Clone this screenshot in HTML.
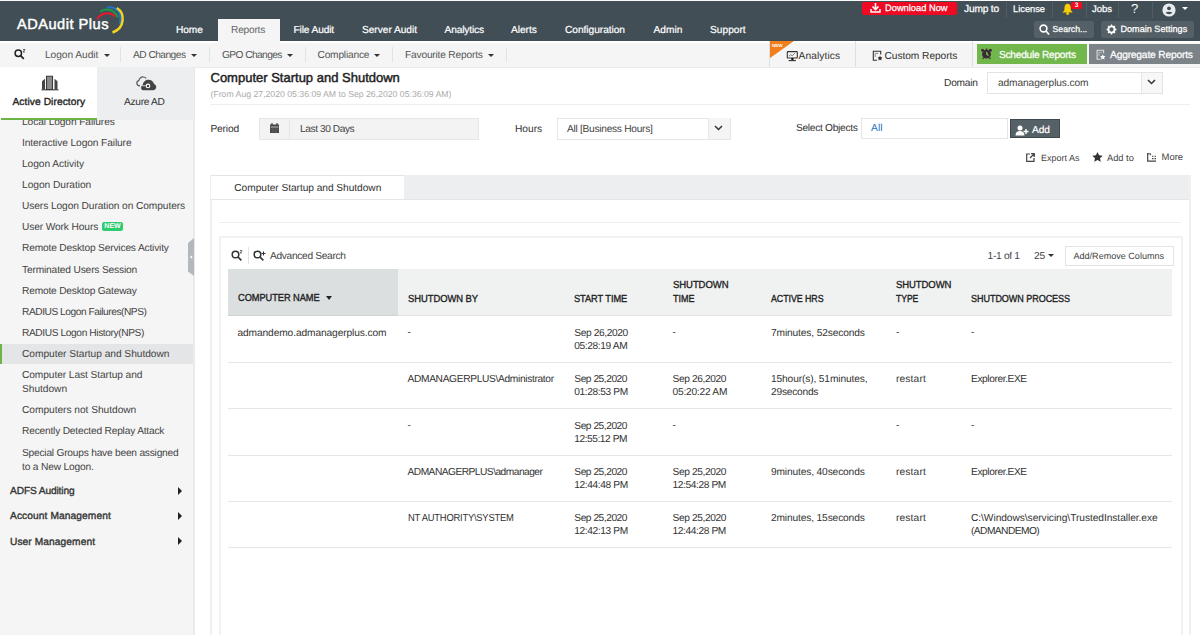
<!DOCTYPE html>
<html><head><meta charset="utf-8">
<style>
*{box-sizing:border-box;margin:0;padding:0}
html,body{width:1200px;height:635px;overflow:hidden;background:#fff}
body{position:relative;font-family:"Liberation Sans",sans-serif;color:#333;text-rendering:geometricPrecision}
.a{position:absolute}
.t{position:absolute;white-space:nowrap;height:20px;line-height:20px}
#hdr{left:0;top:0;width:1200px;height:41px;background:#424e56}
#sub{left:0;top:41px;width:1200px;height:26.5px;background:#f5f5f5;border-top:2px solid #fff;border-bottom:1px solid #ebebeb}
.nav{color:#fff;font-size:10.1px;top:20px;-webkit-text-stroke:0.2px #fff}
.sb{color:#555;font-size:9.8px;top:45px}
.sep{position:absolute;width:1px;background:#e3e3e3;top:47px;height:15px}
.hsep{position:absolute;width:1px;background:#525c64;top:2px;height:15.5px}
#side{left:0;top:67px;width:195px;height:568px;background:#f5f5f5;border-right:2px solid #e8eaec}
.si{color:#444;font-size:10px;left:22px}
.sh{color:#333;font-size:9.6px;-webkit-text-stroke:0.35px #333;left:10px}
.caret{position:absolute;width:0;height:0;border-left:3px solid transparent;border-right:3px solid transparent;border-top:3px solid #333}
.rc{position:absolute;width:0;height:0;border-top:4px solid transparent;border-bottom:4px solid transparent;border-left:4px solid #222}
.th{font-size:9.2px;-webkit-text-stroke:0.35px #222;color:#222}
.td{font-size:10px;color:#333}
.hl{position:absolute;left:228px;width:944px;height:1px;background:#e6e6e6}
</style></head><body>
<!-- HEADER -->
<div id="hdr" class="a"></div>
<div class="a" style="left:0;top:0;width:1200px;height:1px;background:#fafafa"></div>
<div class="t" style="left:17px;top:15.3px;font-size:14.6px;letter-spacing:0.5px;-webkit-text-stroke:0.45px #fff;color:#fff;">ADAudit Plus</div>
<svg class="a" style="left:90px;top:2px" width="40" height="34" viewBox="0 0 40 34">
 <path d="M7.2 17.3 C10 11 20 9 25.2 14.5" stroke="#e8192c" stroke-width="1.9" fill="none"/>
 <path d="M10.2 9.8 C14 6.5 24 5.5 27.9 15.5" stroke="#1d9a48" stroke-width="2" fill="none"/>
 <path d="M17.1 5.6 C25 4 32.5 10 30 22" stroke="#1e74c8" stroke-width="2" fill="none"/>
 <path d="M26.8 6 C35 11 35.5 26 22.5 30.5" stroke="#f5d31c" stroke-width="2.5" fill="none"/>
</svg>
<div class="a" style="left:218px;top:19px;width:62px;height:25px;background:#f5f5f5;z-index:1"></div>
<div class="t nav" style="left:176px;font-size:10.2px;letter-spacing:-0.078px;top:21px">Home</div>
<div class="t nav" style="z-index:2;left:231px;color:#666;-webkit-text-stroke:0;font-size:10.2px;letter-spacing:-0.227px;top:21px">Reports</div>
<div class="t nav" style="left:293.5px;font-size:10.2px;letter-spacing:-0.142px;top:21px">File Audit</div>
<div class="t nav" style="left:362px;font-size:10.2px;letter-spacing:-0.047px;top:21px">Server Audit</div>
<div class="t nav" style="left:444.5px;font-size:10.2px;letter-spacing:-0.156px;top:21px">Analytics</div>
<div class="t nav" style="left:511px;font-size:10.2px;letter-spacing:-0.046px;top:21px">Alerts</div>
<div class="t nav" style="left:565px;font-size:10.2px;letter-spacing:-0.047px;top:21px">Configuration</div>
<div class="t nav" style="left:653.5px;font-size:10.2px;letter-spacing:0.000px;top:21px">Admin</div>
<div class="t nav" style="left:710px;font-size:10.2px;letter-spacing:-0.000px;top:21px">Support</div>

<div class="a" style="left:862px;top:1.5px;width:95px;height:13.5px;background:#ee0a23;border-radius:2px"></div>
<svg class="a" style="left:870px;top:3px" width="11" height="10" viewBox="0 0 11 10"><path d="M5.5 0v6M2.5 3.5l3 3 3-3" stroke="#fff" stroke-width="1.6" fill="none"/><path d="M1 6v3h9V6" stroke="#fff" stroke-width="1.4" fill="none"/></svg>
<div class="t" style="left:885px;top:-2px;font-size:9.3px;color:#fff;-webkit-text-stroke:0.25px #fff">Download Now</div>
<div class="t" style="left:964px;top:0px;color:#fff;-webkit-text-stroke:0.25px #fff;font-size:10.2px;letter-spacing:-0.185px">Jump to</div>
<div class="hsep" style="left:1006px"></div>
<div class="t" style="left:1013px;top:-1px;font-size:9.3px;color:#fff;-webkit-text-stroke:0.25px #fff">License</div>
<div class="hsep" style="left:1052px"></div>
<svg class="a" style="left:1062px;top:3px" width="12" height="12" viewBox="0 0 12 12"><path d="M5.6 .8C3.3 .8 2.6 2.8 2.5 4.5L2.3 7.3 .4 9.4H10.8L8.9 7.3 8.7 4.5C8.6 2.8 7.9 .8 5.6 .8Z" fill="#f5cd00"/><ellipse cx="5.6" cy="10.6" rx="1.5" ry="1.3" fill="#f5cd00"/></svg>
<div class="a" style="left:1071px;top:1.5px;width:11px;height:7.5px;background:#f50a1f;border-radius:1.5px;color:#fff;font-size:6.5px;line-height:7.5px;text-align:center;font-weight:bold">3</div>
<div class="hsep" style="left:1086px"></div>
<div class="t" style="left:1092px;top:-0.5px;font-size:9.5px;color:#fff;-webkit-text-stroke:0.25px #fff">Jobs</div>
<div class="hsep" style="left:1118px"></div>
<div class="t" style="left:1131px;top:-1px;font-size:13px;color:#fff">?</div>
<div class="hsep" style="left:1152px"></div>
<svg class="a" style="left:1162px;top:2.5px" width="14" height="14" viewBox="0 0 14 14"><circle cx="7" cy="7" r="6.6" fill="#e9ecee"/><circle cx="7" cy="5.3" r="1.9" fill="#434d54"/><path d="M3.6 9.6C4.5 10.9 5.6 11.3 7 11.3S9.5 10.9 10.4 9.6C9.5 9 8.4 8.7 7 8.7S4.5 9 3.6 9.6Z" fill="#434d54"/></svg>
<div class="caret" style="left:1181.5px;top:7px;border-left-width:3.3px;border-right-width:3.3px;border-top:3.8px solid #fff"></div>

<div class="a" style="left:1034px;top:21px;width:60px;height:17px;background:#555f66;border-radius:2px"></div>
<svg class="a" style="left:1039px;top:24px" width="11" height="12" viewBox="0 0 11 12"><circle cx="4.5" cy="4.5" r="3.4" stroke="#fff" stroke-width="1.6" fill="none"/><path d="M7 7l3 3.5" stroke="#fff" stroke-width="1.8"/></svg>
<div class="t" style="left:1052.5px;top:19px;font-size:8.7px;color:#fff;-webkit-text-stroke:0.25px #fff">Search...</div>
<div class="a" style="left:1101px;top:21px;width:93px;height:17px;background:#555f66;border-radius:2px"></div>
<svg class="a" style="left:1106px;top:24.3px" width="11" height="11" viewBox="0 0 11 11"><circle cx="5.5" cy="5.5" r="3.1" stroke="#fff" stroke-width="1.9" fill="none"/><path d="M9.10 5.50L10.40 5.50M8.05 8.05L8.96 8.96M5.50 9.10L5.50 10.40M2.95 8.05L2.04 8.96M1.90 5.50L0.60 5.50M2.95 2.95L2.04 2.04M5.50 1.90L5.50 0.60M8.05 2.95L8.96 2.04" stroke="#fff" stroke-width="1.3"/></svg>
<div class="t" style="left:1120.5px;top:19px;font-size:9.1px;color:#fff;-webkit-text-stroke:0.25px #fff">Domain Settings</div>

<!-- SUBBAR -->
<div id="sub" class="a"></div>
<svg class="a" style="left:14px;top:49px" width="12" height="11" viewBox="0 0 12 11"><circle cx="4.3" cy="4.3" r="3.2" stroke="#222" stroke-width="1.5" fill="none"/><path d="M6.6 6.6l3.2 3.2" stroke="#222" stroke-width="1.7"/><path d="M9 0.5h2l-2 2.5h2" stroke="#222" stroke-width="0.7" fill="none"/></svg>
<div class="t sb" style="left:45px;font-size:10.2px;letter-spacing:-0.048px;top:46px">Logon Audit</div>
<div class="caret" style="left:103.5px;top:54px"></div>
<div class="sep" style="left:120px"></div>
<div class="t sb" style="left:133px;font-size:10.2px;letter-spacing:-0.531px;top:46px">AD Changes</div>
<div class="caret" style="left:190.5px;top:54px"></div>
<div class="sep" style="left:209px"></div>
<div class="t sb" style="left:222px;font-size:10.2px;letter-spacing:-0.580px;top:46px">GPO Changes</div>
<div class="caret" style="left:286.5px;top:54px"></div>
<div class="sep" style="left:305px"></div>
<div class="t sb" style="left:317.5px;font-size:10.2px;letter-spacing:-0.201px;top:46px">Compliance</div>
<div class="caret" style="left:374px;top:54px"></div>
<div class="sep" style="left:392px"></div>
<div class="t sb" style="left:405px;font-size:10.2px;letter-spacing:-0.193px;top:46px">Favourite Reports</div>
<div class="caret" style="left:488px;top:54px"></div>
<div class="sep" style="left:505.5px"></div>

<div class="a" style="left:769px;top:41px;width:1px;height:26px;background:#e0e0e0"></div>
<svg class="a" style="left:770px;top:41px" width="24" height="17" viewBox="0 0 24 17"><path d="M0 0H24L0 17z" fill="#f07f1b"/><text x="2" y="6" font-size="4.5" fill="#fff" font-family="Liberation Sans" font-weight="bold">NEW</text></svg>
<svg class="a" style="left:786px;top:50px" width="12" height="12" viewBox="0 0 12 12"><rect x="1.3" y="1.6" width="10" height="6.4" rx=".6" stroke="#333" stroke-width="1.1" fill="none"/><path d="M3 6.2L4.7 4.6 6.2 5.8 8.8 3.3" stroke="#666" stroke-width=".9" fill="none"/><rect x="5.3" y="8" width="2.2" height="2.2" fill="#111"/><path d="M2.6 10.6H9.9" stroke="#333" stroke-width="1.1"/></svg>
<div class="t" style="left:798.5px;top:46.5px;color:#333;font-size:10.2px;letter-spacing:0.102px">Analytics</div>
<div class="a" style="left:855px;top:41px;width:1px;height:26px;background:#e0e0e0"></div>
<svg class="a" style="left:872px;top:50px" width="11" height="12" viewBox="0 0 11 12"><path d="M5 10.3H1.3V1.2H8.7V4.6" stroke="#333" stroke-width="1.1" fill="none"/><path d="M3.2 3.3H6.3M3.2 3.3V7" stroke="#999" stroke-width="1.2" fill="none"/><path d="M8.00 5.60 L8.71 7.32 L10.57 7.47 L9.16 8.68 L9.59 10.48 L8.00 9.52 L6.41 10.48 L6.84 8.68 L5.43 7.47 L7.29 7.32Z" fill="#222"/></svg>
<div class="t" style="left:884.5px;top:46.5px;color:#333;font-size:10.2px;letter-spacing:-0.050px">Custom Reports</div>
<div class="a" style="left:972px;top:41px;width:1px;height:26px;background:#e0e0e0"></div>
<div class="a" style="left:977px;top:44px;width:109.5px;height:20px;background:#72b74c"></div>
<svg class="a" style="left:980px;top:47px" width="13" height="13" viewBox="0 0 13 13"><circle cx="6.5" cy="7.2" r="4.4" fill="#3b2a35"/><circle cx="2.6" cy="3.3" r="1.5" fill="#3b2a35"/><circle cx="10.4" cy="3.3" r="1.5" fill="#3b2a35"/><circle cx="6.5" cy="2.3" r=".9" fill="#3b2a35"/><path d="M6.5 4.8V7.6L8.4 8.6Z" fill="#72b74c" stroke="#72b74c" stroke-width=".8"/><path d="M3.6 10.6L2.6 12M9.4 10.6L10.4 12" stroke="#3b2a35" stroke-width="1.2"/></svg>
<div class="t" style="left:999px;top:46px;color:#fff;-webkit-text-stroke:0.25px #fff;font-size:10.2px;letter-spacing:-0.265px">Schedule Reports</div>
<div class="a" style="left:1089px;top:44px;width:111px;height:20px;background:#7b8288"></div>
<svg class="a" style="left:1096px;top:49px" width="11" height="12" viewBox="0 0 11 12"><path d="M4.5 10.3H1.1V1.2H7.6V4.3" stroke="#ddd" stroke-width="1.1" fill="none"/><path d="M3 3.2H5.8M3 3.2V7" stroke="#bbb" stroke-width="1.1" fill="none"/><path d="M6.80 5.20 L7.59 7.11 L9.65 7.27 L8.08 8.62 L8.56 10.63 L6.80 9.55 L5.04 10.63 L5.52 8.62 L3.95 7.27 L6.01 7.11Z" fill="#fff"/></svg>
<div class="t" style="left:1110px;top:46px;color:#fff;-webkit-text-stroke:0.25px #fff;font-size:10.2px;letter-spacing:-0.163px">Aggregate Reports</div>

<!-- SIDEBAR -->
<div id="side" class="a"></div>
<div class="a" style="left:97px;top:67px;width:97px;height:53px;background:#eceeef"></div>
<div class="a" style="left:0;top:67px;width:97px;height:53px;background:#fff"></div>
<div class="a" style="left:1px;top:118px;width:96px;height:2px;background:#6cb446"></div>
<svg class="a" style="left:40px;top:74px" width="20" height="17" viewBox="0 0 20 17"><path d="M6.5 2.2h6v13.3h-6z" stroke="#3a3a3a" stroke-width="1.1" fill="#8c8c8c"/><path d="M2 7.3L5 4.7V15.5H2z" fill="#454545"/><path d="M14.5 4.7L17.5 7.3V15.5H14.5z" fill="#454545"/><path d="M1.5 15.8H18.5" stroke="#3a3a3a" stroke-width="1.1"/></svg>
<div class="t" style="left:12.5px;top:92.5px;-webkit-text-stroke:0.35px #222;color:#222;font-size:10.2px;letter-spacing:0.080px">Active Directory</div>
<svg class="a" style="left:132px;top:72px" width="28" height="22" viewBox="0 0 28 22"><path d="M8 13.8C4 13.8 4 9.2 6.8 8.6 7.3 6 9.5 4.6 11.5 5 12.6 5.1 13.5 5.6 14.2 6.4" stroke="#555" stroke-width="1.15" fill="none"/><path d="M11 18.2C8.7 18.2 8.3 14 10.6 13.5 11 9.8 13.8 7.8 16.5 7.8 19.3 7.8 21.4 9.8 22 12 23.6 12.4 24.2 13.8 24.2 15 24.2 17 22.8 18.2 21 18.2Z" fill="#444"/><path d="M9.3 13.7H14.3" stroke="#bbb" stroke-width="1.1"/><circle cx="16" cy="13.9" r="1.8" stroke="#fff" stroke-width="1.1" fill="#444"/></svg>
<div class="t" style="left:124px;top:92.5px;color:#333;font-size:10.2px;letter-spacing:-0.304px">Azure AD</div>

<div class="a" style="left:0;top:120px;width:193px;height:10px;overflow:hidden">
  <div class="t si" style="top:-7.5px;font-size:10.2px;letter-spacing:-0.092px">Local Logon Failures</div>
</div>
<div class="t si" style="top:133.5px;font-size:10.2px;letter-spacing:-0.107px">Interactive Logon Failure</div>
<div class="t si" style="top:154.5px;font-size:10.2px;letter-spacing:-0.066px">Logon Activity</div>
<div class="t si" style="top:175.5px;font-size:10.2px;letter-spacing:-0.031px">Logon Duration</div>
<div class="t si" style="top:197px;font-size:10.2px;letter-spacing:-0.087px">Users Logon Duration on Computers</div>
<div class="t si" style="top:218px;font-size:10.2px;letter-spacing:-0.120px">User Work Hours</div>
<div class="a" style="left:102px;top:222px;width:21px;height:9px;background:#2ecc71;border-radius:2px;color:#fff;font-size:7px;line-height:9px;text-align:center;font-weight:bold">NEW</div>
<div class="t si" style="top:239px;font-size:10.2px;letter-spacing:-0.173px">Remote Desktop Services Activity</div>
<div class="t si" style="top:260.5px;font-size:10.2px;letter-spacing:-0.158px">Terminated Users Session</div>
<div class="t si" style="top:281.5px;font-size:10.2px;letter-spacing:-0.191px">Remote Desktop Gateway</div>
<div class="t si" style="top:302.5px;font-size:10.2px;letter-spacing:-0.461px">RADIUS Logon Failures(NPS)</div>
<div class="t si" style="top:323.5px;font-size:10.2px;letter-spacing:-0.396px">RADIUS Logon History(NPS)</div>
<div class="a" style="left:0;top:344px;width:193px;height:20px;background:#e3e5e6"></div>
<div class="a" style="left:0;top:344px;width:2px;height:20px;background:#6cb446"></div>
<div class="t si" style="top:345px;font-size:10.2px;letter-spacing:-0.033px">Computer Startup and Shutdown</div>
<div class="t si" style="top:366px;font-size:10.2px;letter-spacing:-0.078px">Computer Last Startup and</div>
<div class="t si" style="top:380px;font-size:10.2px;letter-spacing:-0.038px">Shutdown</div>
<div class="t si" style="top:401px;font-size:10.2px;letter-spacing:-0.033px">Computers not Shutdown</div>
<div class="t si" style="top:421.5px;font-size:10.2px;letter-spacing:-0.197px">Recently Detected Replay Attack</div>
<div class="t si" style="top:444px;font-size:10.2px;letter-spacing:-0.220px">Special Groups have been assigned</div>
<div class="t si" style="top:457.5px;font-size:10.2px;letter-spacing:-0.163px">to a New Logon.</div>
<div class="t sh" style="top:482px;font-size:10.2px;letter-spacing:-0.135px">ADFS Auditing</div>
<div class="rc" style="left:177.5px;top:486.5px;border-top-width:4px;border-bottom-width:4px;border-left-width:4px"></div>
<div class="t sh" style="top:507px;font-size:10.2px;letter-spacing:0.099px">Account Management</div>
<div class="rc" style="left:177.5px;top:511.5px;border-top-width:4px;border-bottom-width:4px;border-left-width:4px"></div>
<div class="t sh" style="top:533px;font-size:10.2px;letter-spacing:0.084px">User Management</div>
<div class="rc" style="left:177.5px;top:537px;border-top-width:4px;border-bottom-width:4px;border-left-width:4px"></div>
<svg class="a" style="left:188px;top:238px" width="6" height="38" viewBox="0 0 6 38"><path d="M6 0V38L0 33.5V5z" fill="#b3b8bc"/><path d="M1.8 19l2.4-1.8v3.6z" fill="#fff"/></svg>

<!-- MAIN -->
<div class="t" style="left:210.5px;top:67.5px;font-size:13px;-webkit-text-stroke:0.45px #222;color:#222">Computer Startup and Shutdown</div>
<div class="t" style="left:210.5px;top:84px;font-size:8.7px;color:#aaa">(From Aug 27,2020 05:36:09 AM to Sep 26,2020 05:36:09 AM)</div>
<div class="a" style="left:210px;top:104px;width:980px;height:1px;background:#eeeeee"></div>
<div class="t" style="left:944px;top:74px;color:#333;font-size:10.2px;letter-spacing:-0.216px">Domain</div>
<div class="a" style="left:987px;top:72px;width:176px;height:22px;background:#fff;border:1px solid #e3e3e3"></div>
<div class="a" style="left:1141px;top:73px;width:1px;height:20px;background:#e3e3e3"></div>
<div class="a" style="left:1142px;top:73px;width:20px;height:20px;background:#f7f7f7"></div>
<svg class="a" style="left:1147px;top:79px" width="9" height="6" viewBox="0 0 9 6"><path d="M1 1l3.5 3.5L8 1" stroke="#333" stroke-width="1.5" fill="none"/></svg>
<div class="t" style="left:998px;top:74px;color:#444;font-size:10.2px;letter-spacing:-0.107px">admanagerplus.com</div>

<div class="t" style="left:210.5px;top:119.5px;color:#333;font-size:10.2px;letter-spacing:-0.181px">Period</div>
<div class="a" style="left:259px;top:117.5px;width:220px;height:22px;background:#f3f3f3;border:1px solid #e6e6e6"></div>
<div class="a" style="left:289px;top:118px;width:1px;height:21px;background:#e6e6e6"></div>
<svg class="a" style="left:270px;top:123px" width="9" height="10" viewBox="0 0 9 10"><rect x="0" y="1.5" width="9" height="8.5" fill="#444"/><path d="M2 0v2M7 0v2" stroke="#444" stroke-width="1.2"/><path d="M.5 4h8" stroke="#f3f3f3" stroke-width=".7"/><path d="M3 4v6M6 4v6M0 6.2h9M0 8.2h9" stroke="#888" stroke-width=".3"/></svg>
<div class="t" style="left:300px;top:120px;color:#444;font-size:10.2px;letter-spacing:-0.432px">Last 30 Days</div>
<div class="t" style="left:515px;top:119.5px;color:#333;font-size:10.2px;letter-spacing:0.004px">Hours</div>
<div class="a" style="left:556.5px;top:117.5px;width:174.5px;height:22px;background:#fff;border:1px solid #e6e6e6"></div>
<div class="a" style="left:708px;top:118px;width:22px;height:20.5px;background:#f5f5f5;border-left:1px solid #e6e6e6"></div>
<svg class="a" style="left:714px;top:125px" width="9" height="6" viewBox="0 0 9 6"><path d="M1 1l3.5 3.5L8 1" stroke="#333" stroke-width="1.5" fill="none"/></svg>
<div class="t" style="left:567px;top:120px;color:#444;font-size:10.2px;letter-spacing:-0.280px">All [Business Hours]</div>
<div class="t" style="left:796px;top:119px;color:#333;font-size:10.2px;letter-spacing:-0.294px">Select Objects</div>
<div class="a" style="left:861px;top:117.5px;width:147px;height:21.5px;background:#fff;border:1px solid #e6e6e6"></div>
<div class="t" style="left:871px;top:118.5px;color:#1a73c5;font-size:10.2px;letter-spacing:0.109px">All</div>
<div class="a" style="left:1010px;top:118.5px;width:49.5px;height:19.5px;background:#566067;border:1px solid #3e484e"></div>
<svg class="a" style="left:1015px;top:124.5px" width="14" height="11" viewBox="0 0 14 11"><circle cx="5" cy="3" r="2.5" fill="#fff"/><path d="M0.5 10.5c0-3 2-4.5 4.5-4.5s4.5 1.5 4.5 4.5z" fill="#fff"/><path d="M11 4v5M8.5 6.5h5" stroke="#fff" stroke-width="1.4"/></svg>
<div class="t" style="left:1032px;top:120.5px;color:#fff;-webkit-text-stroke:0.2px #fff;font-size:10.2px;letter-spacing:-0.086px">Add</div>

<svg class="a" style="left:1026px;top:152.5px" width="9" height="9" viewBox="0 0 9 9"><path d="M4 1H.7v7.3H8V5" stroke="#444" stroke-width="1.2" fill="none"/><path d="M4 5l4-4M5 .7h3.3V4" stroke="#444" stroke-width="1.2" fill="none"/></svg>
<div class="t" style="left:1041px;top:148px;font-size:9px;color:#444">Export As</div>
<svg class="a" style="left:1092px;top:151.5px" width="11" height="10" viewBox="0 0 11 10"><path d="M5.5 0l1.6 3.3 3.6.4-2.7 2.5.8 3.6-3.3-1.9-3.3 1.9.8-3.6L.3 3.7l3.6-.4z" fill="#333"/></svg>
<div class="t" style="left:1107px;top:148px;font-size:9.3px;color:#444">Add to</div>
<svg class="a" style="left:1147px;top:153px" width="10" height="9" viewBox="0 0 10 9"><path d="M.7 0v8.2H9" stroke="#444" stroke-width="1.2" fill="none"/><path d="M0 .7h3.5M3.5 .7v1.5M5 3.2h1.5M7.5 3.2H9M5 5.6h1.5M7.5 5.6H9" stroke="#444" stroke-width="1.1"/></svg>
<div class="t" style="left:1161.5px;top:148px;font-size:9.5px;color:#444">More</div>

<!-- report container -->
<div class="a" style="left:210px;top:174.5px;width:981px;height:470px;border-left:2px solid #eef0f1;border-right:2px solid #eef0f1"></div>
<div class="a" style="left:211px;top:174.5px;width:978px;height:25.5px;background:#eceeef"></div>
<div class="a" style="left:211px;top:174.5px;width:193px;height:25px;background:#fff;border-top:1px solid #e3e3e3"></div>
<div class="a" style="left:211px;top:199px;width:978px;height:1px;background:#e4e6e8"></div>
<div class="t" style="left:234.3px;top:179px;color:#333;font-size:10.2px;letter-spacing:-0.048px">Computer Startup and Shutdown</div>
<div class="a" style="left:219px;top:222px;width:962px;height:1px;background:#efefef"></div>
<div class="a" style="left:219px;top:236px;width:963.5px;height:420px;border:2px solid #eff1f2"></div>

<svg class="a" style="left:231px;top:250px" width="12" height="12" viewBox="0 0 12 12"><circle cx="4.5" cy="4.5" r="3.3" stroke="#333" stroke-width="1.5" fill="none"/><path d="M7 7l3.3 3.3" stroke="#333" stroke-width="1.7"/><path d="M9 .5h2l-2 2.5h2" stroke="#333" stroke-width=".7" fill="none"/></svg>
<div class="a" style="left:248px;top:247px;width:1px;height:17px;background:#e3e3e3"></div>
<svg class="a" style="left:253px;top:250px" width="13" height="12" viewBox="0 0 13 12"><circle cx="4.5" cy="4.5" r="3.3" stroke="#333" stroke-width="1.5" fill="none"/><path d="M7 7l3.3 3.3" stroke="#333" stroke-width="1.7"/><path d="M10.5 1.5v4M8.5 3.5h4" stroke="#333" stroke-width="1"/></svg>
<div class="t" style="left:270px;top:246.5px;color:#444;font-size:10.2px;letter-spacing:-0.317px">Advanced Search</div>

<div class="t" style="left:987.5px;top:247px;color:#444;font-size:10.2px;letter-spacing:-0.288px">1-1 of 1</div>
<div class="t" style="left:1034px;top:247px;color:#444;font-size:10.2px;letter-spacing:-0.203px">25</div>
<div class="caret" style="left:1047.5px;top:254px;border-top-color:#333"></div>
<div class="a" style="left:1065px;top:246px;width:108.5px;height:19.5px;border:1px solid #e3e3e3;background:#fff"></div>
<div class="t" style="left:1073.5px;top:245.5px;font-size:9.05px;color:#444">Add/Remove Columns</div>

<!-- table -->
<div class="a" style="left:228px;top:269px;width:944px;height:46.5px;background:#f0f2f2;border-bottom:1px solid #e2e4e4"></div>
<div class="a" style="left:228px;top:269px;width:170px;height:46.5px;background:#dcdfe0;border-bottom:1px solid #d2d2d2"></div>
<div class="t th" style="left:237.5px;top:288.5px;transform:scaleX(0.909);transform-origin:0 0;font-size:10.2px;letter-spacing:-0.061px">COMPUTER NAME</div>
<div class="caret" style="left:325.6px;top:296px;border-left-width:3.6px;border-right-width:3.6px;border-top:4px solid #222"></div>
<div class="t th" style="left:407.5px;top:289.5px;transform:scaleX(0.925);transform-origin:0 0;font-size:10.2px;letter-spacing:-0.065px">SHUTDOWN BY</div>
<div class="t th" style="left:574.3px;top:289.5px;transform:scaleX(0.906);transform-origin:0 0;font-size:10.2px;letter-spacing:-0.053px">START TIME</div>
<div class="t th" style="left:672.5px;top:276px;transform:scaleX(0.934);transform-origin:0 0;font-size:10.2px;letter-spacing:-0.075px">SHUTDOWN</div>
<div class="t th" style="left:672.5px;top:289.5px;transform:scaleX(0.891);transform-origin:0 0;font-size:10.2px;letter-spacing:-0.060px">TIME</div>
<div class="t th" style="left:771px;top:289.5px;transform:scaleX(0.867);transform-origin:0 0;font-size:10.2px;letter-spacing:-0.055px">ACTIVE HRS</div>
<div class="t th" style="left:896px;top:276px;transform:scaleX(0.932);transform-origin:0 0;font-size:10.2px;letter-spacing:-0.074px">SHUTDOWN</div>
<div class="t th" style="left:896px;top:289.5px;transform:scaleX(0.845);transform-origin:0 0;font-size:10.2px;letter-spacing:-0.066px">TYPE</div>
<div class="t th" style="left:971px;top:289.5px;transform:scaleX(0.887);transform-origin:0 0;font-size:10.2px;letter-spacing:-0.062px">SHUTDOWN PROCESS</div>

<!-- row 1 -->
<div class="t td" style="left:237.5px;top:323.5px;font-size:10.2px;letter-spacing:-0.107px">admandemo.admanagerplus.com</div>
<div class="t td" style="left:407.5px;top:322.5px;font-size:9.9px;letter-spacing:0.000px">-</div>
<div class="t td" style="left:574.3px;top:323.5px;font-size:10.2px;letter-spacing:-0.391px">Sep 26,2020</div>
<div class="t td" style="left:574.3px;top:336.5px;font-size:10.2px;letter-spacing:-0.386px">05:28:19 AM</div>
<div class="t td" style="left:672.5px;top:322.5px;font-size:9.9px;letter-spacing:0.000px">-</div>
<div class="t td" style="left:771px;top:323.5px;font-size:10.2px;letter-spacing:-0.131px">7minutes, 52seconds</div>
<div class="t td" style="left:896px;top:322.5px;font-size:9.9px;letter-spacing:0.000px">-</div>
<div class="t td" style="left:971px;top:322.5px;font-size:9.9px;letter-spacing:0.000px">-</div>
<div class="hl" style="top:362px"></div>
<!-- row 2 -->
<div class="t td" style="left:407.5px;top:370px;font-size:10.2px;letter-spacing:-0.329px">ADMANAGERPLUS\Administrator</div>
<div class="t td" style="left:574.3px;top:370px;font-size:10.2px;letter-spacing:-0.461px">Sep 25,2020</div>
<div class="t td" style="left:574.3px;top:383px;font-size:10.2px;letter-spacing:-0.391px">01:28:53 PM</div>
<div class="t td" style="left:672.5px;top:370px;font-size:10.2px;letter-spacing:-0.381px">Sep 26,2020</div>
<div class="t td" style="left:672.5px;top:383px;font-size:10.2px;letter-spacing:-0.228px">05:20:22 AM</div>
<div class="t td" style="left:771px;top:370px;font-size:10.2px;letter-spacing:-0.130px">15hour(s), 51minutes,</div>
<div class="t td" style="left:771px;top:383px;font-size:10.2px;letter-spacing:-0.227px">29seconds</div>
<div class="t td" style="left:896px;top:370px;font-size:10.2px;letter-spacing:0.152px">restart</div>
<div class="t td" style="left:971px;top:370px;font-size:10.2px;letter-spacing:-0.405px">Explorer.EXE</div>
<div class="hl" style="top:408px"></div>
<!-- row 3 -->
<div class="t td" style="left:407.5px;top:415.5px;font-size:9.9px;letter-spacing:0.000px">-</div>
<div class="t td" style="left:574.3px;top:416.5px;font-size:10.2px;letter-spacing:-0.461px">Sep 25,2020</div>
<div class="t td" style="left:574.3px;top:429.5px;font-size:10.2px;letter-spacing:-0.461px">12:55:12 PM</div>
<div class="t td" style="left:672.5px;top:415.5px;font-size:9.9px;letter-spacing:0.000px">-</div>
<div class="t td" style="left:896px;top:415.5px;font-size:9.9px;letter-spacing:0.000px">-</div>
<div class="t td" style="left:971px;top:415.5px;font-size:9.9px;letter-spacing:0.000px">-</div>
<div class="hl" style="top:454.5px"></div>
<!-- row 4 -->
<div class="t td" style="left:407.5px;top:462.5px;font-size:10.2px;letter-spacing:-0.511px">ADMANAGERPLUS\admanager</div>
<div class="t td" style="left:574.3px;top:462.5px;font-size:10.2px;letter-spacing:-0.461px">Sep 25,2020</div>
<div class="t td" style="left:574.3px;top:475.5px;font-size:10.2px;letter-spacing:-0.391px">12:44:48 PM</div>
<div class="t td" style="left:672.5px;top:462.5px;font-size:10.2px;letter-spacing:-0.391px">Sep 25,2020</div>
<div class="t td" style="left:672.5px;top:475.5px;font-size:10.2px;letter-spacing:-0.391px">12:54:28 PM</div>
<div class="t td" style="left:771px;top:462.5px;font-size:10.2px;letter-spacing:-0.140px">9minutes, 40seconds</div>
<div class="t td" style="left:896px;top:462.5px;font-size:10.2px;letter-spacing:0.152px">restart</div>
<div class="t td" style="left:971px;top:462.5px;font-size:10.2px;letter-spacing:-0.405px">Explorer.EXE</div>
<div class="hl" style="top:501px"></div>
<!-- row 5 -->
<div class="t td" style="left:407.5px;top:509px;font-size:10.2px;letter-spacing:-0.25px;transform:scaleX(0.922);transform-origin:0 0">NT AUTHORITY\SYSTEM</div>
<div class="t td" style="left:574.3px;top:509px;font-size:10.2px;letter-spacing:-0.461px">Sep 25,2020</div>
<div class="t td" style="left:574.3px;top:522px;font-size:10.2px;letter-spacing:-0.391px">12:42:13 PM</div>
<div class="t td" style="left:672.5px;top:509px;font-size:10.2px;letter-spacing:-0.391px">Sep 25,2020</div>
<div class="t td" style="left:672.5px;top:522px;font-size:10.2px;letter-spacing:-0.391px">12:44:28 PM</div>
<div class="t td" style="left:771px;top:509px;font-size:10.2px;letter-spacing:-0.140px">2minutes, 15seconds</div>
<div class="t td" style="left:896px;top:509px;font-size:10.2px;letter-spacing:0.152px">restart</div>
<div class="t td" style="left:971px;top:509px;font-size:10.2px;letter-spacing:-0.051px">C:\Windows\servicing\TrustedInstaller.exe</div>
<div class="t td" style="left:971px;top:522px;font-size:10.2px;letter-spacing:-0.545px">(ADMANDEMO)</div>
<div class="hl" style="top:547px"></div>
</body></html>
